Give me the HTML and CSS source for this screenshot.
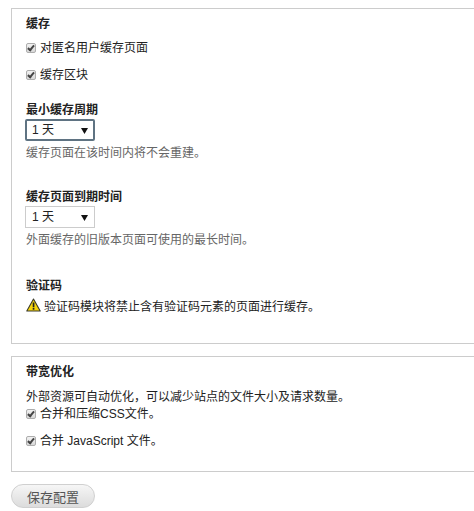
FILE: index.html
```html
<!DOCTYPE html>
<html lang="zh">
<head>
    <meta charset="UTF-8">
    <meta name="viewport" content="width=device-width, initial-scale=1.0">
    <title>性能</title>
    <link rel="stylesheet" href="styles.css">
</head>
<body>
    <form class="settings">
        <fieldset class="panel panel-cache">
            <h2 class="panel-title">缓存</h2>
            <label class="check-row"><input type="checkbox" checked>对匿名用户缓存页面</label>
            <label class="check-row"><input type="checkbox" checked>缓存区块</label>

            <div class="field">
                <label class="field-label" for="minLife">最小缓存周期</label>
                <select id="minLife" class="select select-focus"><option>1 天</option></select>
                <p class="hint">缓存页面在该时间内将不会重建。</p>
            </div>

            <div class="field">
                <label class="field-label" for="maxAge">缓存页面到期时间</label>
                <select id="maxAge" class="select"><option>1 天</option></select>
                <p class="hint">外面缓存的旧版本页面可使用的最长时间。</p>
            </div>

            <div class="field field-captcha">
                <div class="field-label">验证码</div>
                <p class="warning">
                    <svg class="warning-icon" width="15" height="14" viewBox="0 0 15 14">
                        <path d="M7.5 1 L14.2 13 H0.8 Z" fill="#f6d50a" stroke="#3a3a2a" stroke-width="1.1" stroke-linejoin="round"/>
                        <rect x="6.7" y="4.5" width="1.7" height="4.8" fill="#222"/>
                        <rect x="6.7" y="10" width="1.7" height="1.7" fill="#222"/>
                    </svg>
                    验证码模块将禁止含有验证码元素的页面进行缓存。
                </p>
            </div>
        </fieldset>

        <fieldset class="panel panel-bandwidth">
            <h2 class="panel-title">带宽优化</h2>
            <p class="intro">外部资源可自动优化，可以减少站点的文件大小及请求数量。</p>
            <label class="check-row"><input type="checkbox" checked>合并和压缩CSS文件。</label>
            <label class="check-row"><input type="checkbox" checked>合并 JavaScript 文件。</label>
        </fieldset>

        <button type="button" class="save">保存配置</button>
    </form>
</body>
</html>
```

FILE: styles.css
```css
html, body {
    overflow: hidden;
}

body {
    margin: 0;
    height: 511px;
    background-color: #fff;
    color: #333;
    font-family: "Liberation Sans", "Noto Sans CJK SC", sans-serif;
    font-size: 12px;
    line-height: 18px;
}

.settings {
    width: 463px;
    padding: 8px 0 0 11px;
}

.panel {
    display: block;
    width: 480px;
    margin: 0;
    padding: 0 0 0 14px;
    border: 1px solid #ccc;
    min-width: 0;
    box-sizing: border-box;
}

.panel-cache {
    height: 336px;
}

.panel-bandwidth {
    height: 116px;
    margin-top: 12px;
}

.panel-title {
    margin: 0;
    padding: 6px 0 0;
    font-size: 12px;
    line-height: 18px;
    font-weight: bold;
    color: #222;
}

.check-row {
    display: flex;
    align-items: center;
    height: 18px;
    margin-top: 9px;
    color: #222;
}

.panel-title + .check-row {
    margin-top: 6px;
}

.check-row input {
    appearance: none;
    position: relative;
    flex: none;
    width: 8px;
    height: 8px;
    margin: 0 4px 0 0;
    border: 1px solid #adadad;
    border-radius: 2px;
    background: linear-gradient(#f2f2f2, #d8d8d8);
    box-sizing: content-box;
}

.check-row input::before {
    content: '';
    position: absolute;
    left: 2px;
    top: 0;
    width: 2px;
    height: 5px;
    border: solid #444;
    border-width: 0 2px 2px 0;
    transform: rotate(40deg);
}

.field {
    margin-top: 17px;
}

.field + .field {
    margin-top: 26px;
}

.field-captcha.field {
    margin-top: 28px;
}

.field-label {
    display: block;
    font-weight: bold;
    color: #222;
}

.select {
    display: block;
    width: 70px;
    height: 22px;
    margin-left: -1px;
    padding: 0 0 0 6px;
    border: 1px solid #ccc;
    border-radius: 0;
    appearance: none;
    background: #fff url("data:image/svg+xml,%3Csvg xmlns='http://www.w3.org/2000/svg' width='7' height='6'%3E%3Cpath d='M0 0H7L3.5 6Z' fill='%23111'/%3E%3C/svg%3E") no-repeat 55px 8px;
    color: #222;
    font-family: inherit;
    font-size: 12px;
}

.select-focus {
    border: 2px solid #5f7382;
    border-radius: 2px;
    padding-left: 5px;
    background-position: 54px 7px;
}

.hint {
    margin: 3px 0 0;
    color: #666;
}

.warning {
    display: flex;
    align-items: center;
    margin: 3px 0 0;
    color: #222;
}

.warning-icon {
    flex: none;
    margin: -4px 3px 0 0;
}

.intro {
    margin: 7px 0 0;
    color: #222;
}

.panel-bandwidth .intro + .check-row {
    margin-top: -1px;
}

.save {
    display: block;
    width: 84px;
    height: 24px;
    margin: 12px 0 0;
    padding: 0;
    border: 1px solid #d0d0d0;
    border-radius: 12px;
    background: linear-gradient(#f6f6f6, #dcdcdc);
    color: #555;
    font-family: inherit;
    font-size: 13px;
}
```
